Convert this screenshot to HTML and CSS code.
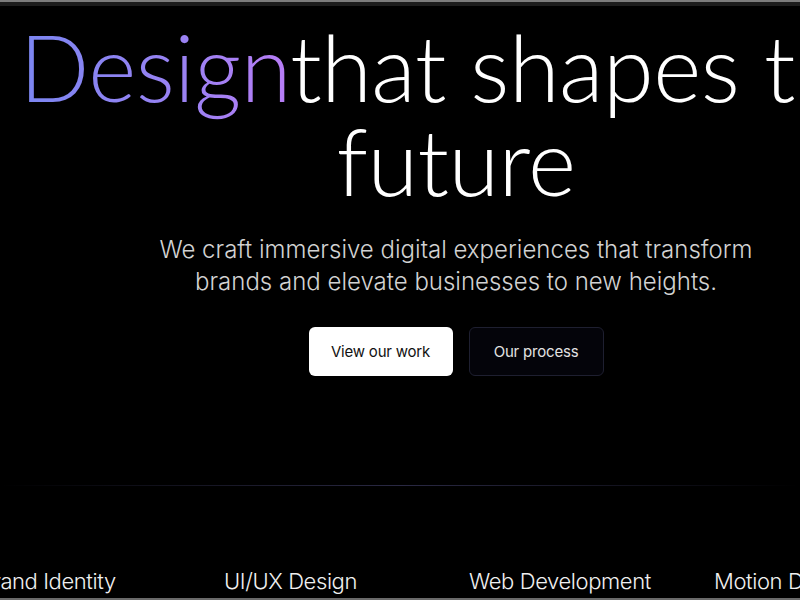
FILE: index.html
```html
<!DOCTYPE html>
<html lang="en">
<head>
<meta charset="utf-8">
<title>Design that shapes the future</title>
<link rel="stylesheet" href="styles.css">
</head>
<body>
<div class="topbar"></div>
<main class="hero">
  <div class="hero-inner">
    <h1 class="title"><span class="grad">Design</span>that shapes the future</h1>
    <p class="lead">We craft immersive digital experiences that transform brands and elevate businesses to new heights.</p>
    <div class="actions">
      <a class="btn btn-light" href="#">View our work</a>
      <a class="btn btn-dark" href="#">Our process</a>
    </div>
  </div>
</main>
<div class="divider"></div>
<div class="services">
  <div class="track">
    <span class="item">Brand Identity</span>
    <span class="item">UI/UX Design</span>
    <span class="item">Web Development</span>
    <span class="item">Motion Design</span>
  </div>
</div>
<div class="bottombar"></div>
</body>
</html>
```
FILE: styles.css
```css
html, body {
  margin: 0;
  padding: 0;
  background: #000;
  height: 600px;
  overflow: hidden;
}
body {
  font-family: "Inter", "Liberation Sans", sans-serif;
  color: #fff;
  width: 800px;
  position: relative;
}
.topbar {
  height: 4px;
  background: #1c1c1c;
  border-top: 2px solid #7c7c7c;
}
.hero {
  width: 800px;
}
.hero-inner {
  margin-left: 6px;
  width: 900px;
  text-align: center;
}
.title {
  margin: 0;
  padding-top: 14px;
  font-family: "Lato", "Inter", sans-serif;
  font-size: 92px;
  font-weight: 300;
  line-height: 94px;
  letter-spacing: -0.5px;
}
.grad {
  background: linear-gradient(90deg, #7b86f1 0%, #9a82f3 60%, #b87df6 100%);
  -webkit-background-clip: text;
  background-clip: text;
  color: transparent;
}
.lead {
  margin: 26px auto 0;
  width: 600px;
  font-size: 24px;
  font-weight: 300;
  line-height: 32px;
  color: #d2d2d2;
}
.actions {
  display: flex;
  justify-content: center;
  gap: 16px;
  margin-top: 29px;
}
.btn {
  display: flex;
  align-items: center;
  justify-content: center;
  height: 49px;
  box-sizing: border-box;
  border-radius: 6px;
  font-size: 15px;
  letter-spacing: -0.2px;
  text-decoration: none;
}
.btn-light {
  width: 144px;
  background: #fff;
  color: #111;
}
.btn-dark {
  width: 135px;
  background: #04040a;
  border: 1px solid #1e1f30;
  color: #e2e2e2;
}
.divider {
  margin-top: 109px;
  height: 1px;
  background: linear-gradient(90deg, rgba(40,38,64,0) 0%, #2a2944 50%, rgba(40,38,64,0) 100%);
}
.services {
  margin-top: 82px;
  overflow: hidden;
}
.track {
  display: flex;
  margin-left: -21px;
}
.item {
  flex: 0 0 245px;
  font-size: 22px;
  font-weight: 300;
  letter-spacing: -0.4px;
  white-space: nowrap;
  color: #f0f0f0;
}
.bottombar {
  position: absolute;
  left: 0;
  right: 0;
  bottom: 0;
  height: 2px;
  background: #6a6a6a;
}
```
